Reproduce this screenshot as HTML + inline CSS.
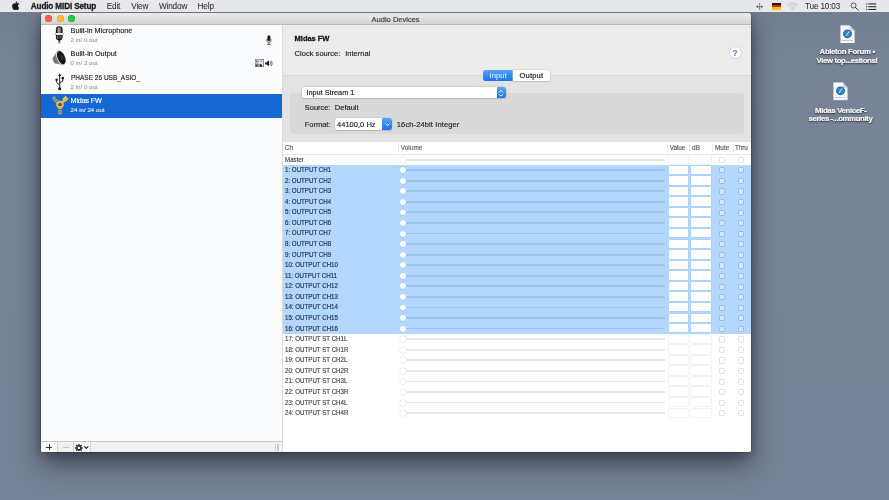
<!DOCTYPE html>
<html><head><meta charset="utf-8"><title>Audio Devices</title>
<style>
html,body{margin:0;padding:0}
body{width:889px;height:500px;overflow:hidden;position:relative;background:linear-gradient(#717d92 0,#778397 60px,#768297 100%);font-family:"Liberation Sans",sans-serif}
.r{position:absolute;display:block;box-sizing:border-box}
.t{position:absolute;white-space:nowrap;display:block;-webkit-text-stroke:0.16px}
</style></head><body>
<div class="r" style="left:0;top:0;width:889px;height:500px;will-change:transform">
<div class="r" style="left:0;top:0;width:889px;height:13px;z-index:5">
<div class="r" style="left:0.00px;top:0.00px;width:889.00px;height:11.60px;background:#e7e8eb;box-shadow:0 0 0 0.5px #8a8f99,0 0.6px 1.4px rgba(0,0,0,0.45);"></div>
<svg class="r" style="left:11.5px;top:1px" width="8" height="9.5" viewBox="0 0 170 200"><path fill="#1a1a1a" d="M150 68c-1 1-22 12-22 38 0 30 26 40 27 41 0 1-4 15-14 29-8 12-17 24-31 24s-17-8-33-8c-15 0-21 8-33 8s-21-11-31-25C2 158-8 130-8 104c0-42 27-64 54-64 14 0 26 9 35 9 8 0 22-10 38-10 6 0 28 1 42 21zM100 29c7-8 11-19 11-30 0-2 0-3 0-4-11 0-24 7-31 16-6 7-12 18-12 29 0 2 0 3 1 4 1 0 2 0 3 0 10 0 22-6 29-15z" transform="translate(10,8) scale(0.92)"/></svg>
<span class="t " style="left:30.80px;top:2.28px;font-size:8.20px;line-height:9.84px;color:#1c1c1c;font-weight:bold;letter-spacing:-0.154px;-webkit-text-stroke:0.3px;">Audio MIDI Setup</span>
<span class="t " style="left:106.70px;top:2.28px;font-size:8.20px;line-height:9.84px;color:#333;letter-spacing:-0.133px;-webkit-text-stroke:0.08px;">Edit</span>
<span class="t " style="left:131.30px;top:2.28px;font-size:8.20px;line-height:9.84px;color:#333;letter-spacing:-0.182px;-webkit-text-stroke:0.08px;">View</span>
<span class="t " style="left:159.00px;top:2.28px;font-size:8.20px;line-height:9.84px;color:#333;letter-spacing:-0.161px;-webkit-text-stroke:0.08px;">Window</span>
<span class="t " style="left:197.40px;top:2.28px;font-size:8.20px;line-height:9.84px;color:#333;letter-spacing:-0.066px;-webkit-text-stroke:0.08px;">Help</span>
<span class="t " style="left:805.00px;top:2.28px;font-size:8.20px;line-height:9.84px;color:#303030;letter-spacing:-0.158px;-webkit-text-stroke:0.05px;">Tue 10:03</span>
<svg class="r" style="left:755.6px;top:3px" width="7.4" height="7.4" viewBox="0 0 16 16"><g fill="#6a6a6a"><path d="M0 8l4.400-3.400v6.800zM16 8l-4.400-3.400v6.800z"/><rect x="3" y="7" width="10" height="2"/><rect x="7.300" y="0.500" width="1.400" height="15"/><path d="M8 0l2 2.600H6zM8 16l2-2.600H6z"/></g></svg>
<div class="r" style="left:771.80px;top:2.60px;width:9.20px;height:2.40px;background:#1a1a1a;"></div>
<div class="r" style="left:771.80px;top:5.00px;width:9.20px;height:2.40px;background:#d8232a;"></div>
<div class="r" style="left:771.80px;top:7.40px;width:9.20px;height:2.30px;background:#f7c600;"></div>
<svg class="r" style="left:787px;top:2.2px" width="11.4" height="8.4" viewBox="0 0 24 18"><g fill="none" stroke="#c4c6ca" stroke-width="2.2" stroke-linecap="round"><path d="M1.5 6.2a15 15 0 0 1 21 0"/><path d="M5 10a10 10 0 0 1 14 0"/><path d="M8.6 13.6a5 5 0 0 1 6.8 0"/></g><circle cx="12" cy="16" r="1.5" fill="#c4c6ca"/></svg>
<svg class="r" style="left:849.5px;top:2px" width="9" height="9" viewBox="0 0 18 18"><circle cx="7" cy="7" r="5" fill="none" stroke="#3a3a3a" stroke-width="1.600"/><path d="M10.800 10.800L16 16" stroke="#3a3a3a" stroke-width="2" stroke-linecap="round"/></svg>
<svg class="r" style="left:866px;top:2.6px" width="10.5" height="7.4" viewBox="0 0 21 15"><g fill="#2a2a2a"><rect x="0" y="0.8" width="2.4" height="2.2"/><rect x="0" y="6.4" width="2.4" height="2.2"/><rect x="0" y="12" width="2.4" height="2.2"/><rect x="4.6" y="0.8" width="16" height="2.2"/><rect x="4.6" y="6.4" width="16" height="2.2"/><rect x="4.6" y="12" width="16" height="2.2"/></g></svg>
</div>
<svg class="r" style="left:839.8px;top:24.6px" width="15" height="18.500" preserveAspectRatio="none" viewBox="0 0 30 38"><path d="M1 1h18.500l9.500 11v25H1z" fill="#fcfcfc" stroke="#cfd3d9" stroke-width="0.700"/><path d="M19.500 1v11h9.500z" fill="#cdd2da"/><circle cx="15" cy="18" r="9" fill="#1b5fae"/><circle cx="15" cy="18" r="7" fill="#2b84d6"/><path d="M18.600 13l-2 6-5 4 2-6z" fill="#4d9be2"/><path d="M18.600 13L11.600 23" stroke="#fff" stroke-width="1.500"/><text x="15" y="33.600" font-size="5" font-weight="bold" fill="#848b97" text-anchor="middle" font-family="Liberation Sans, sans-serif" letter-spacing="0.300">WEBLOC</text></svg>
<svg class="r" style="left:833.2px;top:82.4px" width="15" height="18.500" preserveAspectRatio="none" viewBox="0 0 30 38"><path d="M1 1h18.500l9.500 11v25H1z" fill="#fcfcfc" stroke="#cfd3d9" stroke-width="0.700"/><path d="M19.500 1v11h9.500z" fill="#cdd2da"/><circle cx="15" cy="18" r="9" fill="#1b5fae"/><circle cx="15" cy="18" r="7" fill="#2b84d6"/><path d="M18.600 13l-2 6-5 4 2-6z" fill="#4d9be2"/><path d="M18.600 13L11.600 23" stroke="#fff" stroke-width="1.500"/><text x="15" y="33.600" font-size="5" font-weight="bold" fill="#848b97" text-anchor="middle" font-family="Liberation Sans, sans-serif" letter-spacing="0.300">WEBLOC</text></svg>
<span class="t " style="left:819.60px;top:47.32px;font-size:7.80px;line-height:9.36px;color:#fff;font-weight:bold;letter-spacing:-0.344px;text-shadow:0 0.6px 1.6px rgba(0,0,0,0.75),0 0 0.8px rgba(0,0,0,0.5);-webkit-text-stroke:0.2px;">Ableton Forum •</span>
<span class="t " style="left:816.60px;top:56.32px;font-size:7.80px;line-height:9.36px;color:#fff;font-weight:bold;letter-spacing:-0.386px;text-shadow:0 0.6px 1.6px rgba(0,0,0,0.75),0 0 0.8px rgba(0,0,0,0.5);-webkit-text-stroke:0.2px;">View top...estions!</span>
<span class="t " style="left:815.00px;top:105.52px;font-size:7.80px;line-height:9.36px;color:#fff;font-weight:bold;letter-spacing:-0.354px;text-shadow:0 0.6px 1.6px rgba(0,0,0,0.75),0 0 0.8px rgba(0,0,0,0.5);-webkit-text-stroke:0.2px;">Midas VeniceF-</span>
<span class="t " style="left:808.60px;top:114.12px;font-size:7.80px;line-height:9.36px;color:#fff;font-weight:bold;letter-spacing:-0.384px;text-shadow:0 0.6px 1.6px rgba(0,0,0,0.75),0 0 0.8px rgba(0,0,0,0.5);-webkit-text-stroke:0.2px;">series -...ommunity</span>
<div class="r" style="left:41.00px;top:12.60px;width:710.00px;height:439.70px;background:#ececec;border-radius:3px 3px 2.5px 2.5px;box-shadow:0 12px 26px rgba(0,0,0,0.46),0 2px 13px rgba(0,0,0,0.25),0 0 0 0.5px rgba(0,0,0,0.3);"></div>
<div class="r" style="left:41.00px;top:12.60px;width:710.00px;height:12.30px;background:linear-gradient(#ececec,#d4d4d4);border-radius:3px 3px 0 0;border-bottom:0.7px solid #b9b9b9;"></div>
<div class="r" style="left:45.40px;top:15.20px;width:7.00px;height:7.00px;background:#fc5f57;border-radius:50%;box-shadow:inset 0 0 0 0.4px #e0443e;"></div>
<div class="r" style="left:56.50px;top:15.20px;width:7.00px;height:7.00px;background:#fdbc2e;border-radius:50%;box-shadow:inset 0 0 0 0.4px #dea123;"></div>
<div class="r" style="left:67.60px;top:15.20px;width:7.00px;height:7.00px;background:#28c840;border-radius:50%;box-shadow:inset 0 0 0 0.4px #1aab29;"></div>
<span class="t " style="left:371.60px;top:15.10px;font-size:7.50px;line-height:9.00px;color:#3c3c3c;letter-spacing:0.004px;">Audio Devices</span>
<div class="r" style="left:41.00px;top:25.00px;width:241.00px;height:416.00px;background:#fbfcfd;"></div>
<div class="r" style="left:282.00px;top:25.00px;width:0.60px;height:427.30px;background:#dcdcdc;"></div>
<div class="r" style="left:41.00px;top:94.30px;width:241.00px;height:23.50px;background:#1567d3;"></div>
<span class="t " style="left:70.60px;top:26.85px;font-size:7.25px;line-height:8.70px;color:#262626;letter-spacing:-0.024px;">Built-in Microphone</span>
<span class="t " style="left:70.60px;top:36.34px;font-size:6.10px;line-height:7.32px;color:#a4a4a4;letter-spacing:0.019px;">2 in/ 0 out</span>
<span class="t " style="left:70.60px;top:50.25px;font-size:7.25px;line-height:8.70px;color:#262626;letter-spacing:0.017px;">Built-in Output</span>
<span class="t " style="left:70.60px;top:58.74px;font-size:6.10px;line-height:7.32px;color:#a4a4a4;letter-spacing:0.019px;">0 in/ 2 out</span>
<span class="t " style="left:70.60px;top:73.65px;font-size:7.25px;line-height:8.70px;color:#262626;transform:scaleX(0.8965);transform-origin:0 50%;">PHASE 26 USB_ASIO_</span>
<span class="t " style="left:70.60px;top:82.74px;font-size:6.10px;line-height:7.32px;color:#a4a4a4;letter-spacing:0.019px;">2 in/ 0 out</span>
<span class="t " style="left:70.60px;top:97.15px;font-size:7.25px;line-height:8.70px;color:#fff;letter-spacing:-0.203px;">Midas FW</span>
<span class="t " style="left:70.60px;top:106.24px;font-size:6.10px;line-height:7.32px;color:#d5e4fa;letter-spacing:0.033px;">24 in/ 24 out</span>
<svg class="r" style="left:55px;top:26.4px" width="9" height="17.600" viewBox="0 0 18 35.200"><defs><linearGradient id="mg" x1="0" x2="1"><stop offset="0" stop-color="#3d3d3d"/><stop offset="0.400" stop-color="#a9a9a9"/><stop offset="0.470" stop-color="#2a2a2a"/><stop offset="0.540" stop-color="#9a9a9a"/><stop offset="1" stop-color="#303030"/></linearGradient></defs><rect x="1.800" y="0.400" width="13.400" height="28.400" rx="6.700" fill="#141414"/><rect x="3.700" y="2.300" width="9.600" height="12" rx="4.800" fill="url(#mg)"/><rect x="4.300" y="18.600" width="1.900" height="6.800" rx="0.900" fill="#8f8f8f"/><rect x="7.600" y="18.600" width="1.600" height="7.600" rx="0.800" fill="#5c5c5c"/><rect x="10.800" y="18.600" width="1.900" height="6.800" rx="0.900" fill="#8f8f8f"/><rect x="-0.200" y="14.400" width="17.400" height="2.800" fill="#808080"/><rect x="1.400" y="13.900" width="14.200" height="3.800" fill="#f6f6f6"/><path d="M6.300 28.600h4.400l-1.200 4.600h-2z" fill="#2e2e2e"/><rect x="5.400" y="33" width="6.200" height="1.500" rx="0.700" fill="#6e6e6e"/></svg>
<svg class="r" style="left:51.6px;top:50.2px" width="15.500" height="16.500" viewBox="0 0 31 33"><g transform="rotate(-23 18.700 15.200)"><ellipse cx="5.600" cy="15.200" rx="4" ry="7.600" fill="#2c2c2c" stroke="#b0b0b0" stroke-width="1.100"/><ellipse cx="8.800" cy="15.200" rx="5" ry="9.400" fill="#3a3a3a" stroke="#c8c8c8" stroke-width="1"/><ellipse cx="12.600" cy="15.200" rx="6.400" ry="12" fill="#585858" stroke="#d6d6d6" stroke-width="0.900"/><ellipse cx="17.200" cy="15.200" rx="8.200" ry="15" fill="#e0e0e0" stroke="#8c8c8c" stroke-width="0.800"/><ellipse cx="18.600" cy="15.200" rx="7.200" ry="13.900" fill="#131313"/><ellipse cx="19.800" cy="15.200" rx="3" ry="6" fill="#2f2f2f"/></g></svg>
<svg class="r" style="left:55px;top:73.2px" width="9.4" height="17.6" viewBox="0 0 19 35"><g fill="none" stroke="#151515" stroke-width="1.9" stroke-linejoin="round"><path d="M9.5 4v26"/><path d="M9.5 24L3.2 19v-4.5"/><path d="M9.5 20.5l6.2-4.5V11"/></g><path d="M9.500 0l3.200 5.600h-6.400z" fill="#151515"/><circle cx="3.200" cy="13.200" r="2.400" fill="#151515"/><rect x="13.4" y="7.600" width="4.600" height="4.600" fill="#151515"/><circle cx="9.500" cy="31.400" r="3.100" fill="#151515"/></svg>
<svg class="r" style="left:51.5px;top:96px" width="17" height="19" viewBox="0 0 34 38"><g stroke="#d8b145" fill="none"><g stroke-width="7.600" stroke-dasharray="2.700 1.700"><path d="M16 24v13.500"/><path d="M12 13L1.500 2.500"/></g><path d="M20 13l5.500-5.500" stroke-width="5"/><circle cx="16" cy="17" r="5.400" stroke-width="4.600" stroke="#dcb84e"/></g><circle cx="16" cy="17" r="3.100" fill="#3a4f78"/><rect x="22.600" y="1.200" width="8.800" height="8.800" fill="#e8c050" transform="rotate(45 27 5.600)"/></svg>
<svg class="r" style="left:266.4px;top:35px" width="5.8" height="10" viewBox="0 0 12 20"><rect x="2.800" y="0" width="6.400" height="12" rx="3.200" fill="#1c1c1c"/><path d="M1.200 8.500v1.500a4.800 4.800 0 0 0 9.600 0V8.500" fill="none" stroke="#2a2a2a" stroke-width="1.400"/><rect x="5.200" y="15" width="1.600" height="3.400" fill="#222"/><rect x="2.600" y="18" width="6.800" height="1.600" fill="#222"/></svg>
<svg class="r" style="left:255px;top:59px" width="9" height="8" viewBox="0 0 18 16"><rect x="0.600" y="0.600" width="16.800" height="14.800" fill="#e6e7e9" stroke="#5e5e5e" stroke-width="1.200"/><path d="M1.200 1.200h7.600c-1.600 3.600-2.200 6.400-2 8.200h2.600c0 2 0.200 3.800 0.700 5.400H1.200z" fill="#b4b7bc"/><path d="M1.200 9.500c2 2.400 5 4 8 5.300H1.200z" fill="#4a4c50"/><path d="M3.400 3.400v2.600M12.600 3.400v2.600" stroke="#333" stroke-width="1.300"/><path d="M3 10.400c3 2.400 8.500 2.400 12-0.400" fill="none" stroke="#444" stroke-width="1"/><path d="M10 9.500l0 6.500 1.600-1.600 1.200 2.400 1-0.500-1.200-2.300h2.200z" fill="#111"/></svg>
<svg class="r" style="left:265.4px;top:59.8px" width="8.4" height="6.6" viewBox="0 0 17 13"><path d="M0.500 4.200h3L8 0.500v12L3.500 8.800h-3z" fill="#1a1a1a"/><path d="M10.200 3.600a4 4 0 0 1 0 5.800" fill="none" stroke="#1a1a1a" stroke-width="1.400" stroke-linecap="round"/><path d="M12.600 1.400a7 7 0 0 1 0 10.200" fill="none" stroke="#1a1a1a" stroke-width="1.400" stroke-linecap="round"/></svg>
<div class="r" style="left:41.00px;top:441.00px;width:241.00px;height:11.30px;background:#f1f1f1;border-top:0.6px solid #c9c9c9;border-radius:0 0 0 2.5px;"></div>
<div class="r" style="left:41.00px;top:441.60px;width:16.30px;height:10.70px;background:#fafafa;border-radius:0 0 0 2.5px;"></div>
<div class="r" style="left:73.20px;top:441.60px;width:17.00px;height:10.70px;background:#fafafa;"></div>
<div class="r" style="left:57.30px;top:441.60px;width:0.60px;height:10.70px;background:#d2d2d2;"></div>
<div class="r" style="left:73.00px;top:441.60px;width:0.60px;height:10.70px;background:#d2d2d2;"></div>
<div class="r" style="left:90.20px;top:441.60px;width:0.60px;height:10.70px;background:#d2d2d2;"></div>
<div class="r" style="left:46.20px;top:447.00px;width:5.80px;height:0.65px;background:#333;"></div>
<div class="r" style="left:48.78px;top:444.40px;width:0.65px;height:5.80px;background:#333;"></div>
<div class="r" style="left:63.00px;top:447.20px;width:5.60px;height:0.70px;background:#c3c3c3;"></div>
<svg class="r" style="left:74.8px;top:443.6px" width="7.8" height="7.8" viewBox="-12 -12 24 24"><g fill="#2b2b2b"><rect x="-2.300" y="-12" width="4.600" height="24" rx="0.800" transform="rotate(0)"/><rect x="-2.300" y="-12" width="4.600" height="24" rx="0.800" transform="rotate(45)"/><rect x="-2.300" y="-12" width="4.600" height="24" rx="0.800" transform="rotate(90)"/><rect x="-2.300" y="-12" width="4.600" height="24" rx="0.800" transform="rotate(135)"/><circle r="7.800"/></g><circle r="3.700" fill="#fafafa"/></svg>
<svg class="r" style="left:84px;top:445.6px" width="4.600" height="3.100" viewBox="0 0 9 6"><path d="M1 1l3.5 3.5L8 1" fill="none" stroke="#1c1c1c" stroke-width="2.100" stroke-linecap="round" stroke-linejoin="round"/></svg>
<div class="r" style="left:275.40px;top:444.00px;width:0.60px;height:7.00px;background:#cfcfcf;"></div>
<div class="r" style="left:276.80px;top:444.00px;width:0.60px;height:7.00px;background:#cfcfcf;"></div>
<div class="r" style="left:278.20px;top:444.00px;width:0.60px;height:7.00px;background:#cfcfcf;"></div>
<div class="r" style="left:282.60px;top:25.00px;width:468.40px;height:50.20px;background:#ececec;"></div>
<div class="r" style="left:282.60px;top:75.20px;width:468.40px;height:66.60px;background:#e3e3e3;border-top:0.6px solid #d6d6d6;"></div>
<span class="t " style="left:294.60px;top:34.30px;font-size:7.50px;line-height:9.00px;color:#161616;font-weight:bold;letter-spacing:-0.025px;-webkit-text-stroke:0.3px;">Midas FW</span>
<span class="t " style="left:294.60px;top:48.90px;font-size:7.50px;line-height:9.00px;color:#262626;letter-spacing:0.028px;">Clock source:</span>
<span class="t " style="left:345.20px;top:48.90px;font-size:7.50px;line-height:9.00px;color:#262626;letter-spacing:0.023px;">Internal</span>
<div class="r" style="left:729.60px;top:47.30px;width:11.00px;height:11.00px;background:#fff;border-radius:50%;box-shadow:0 0 0 0.5px #c8c8c8,0 0.5px 1px rgba(0,0,0,0.16);"></div>
<span class="t " style="left:732.60px;top:47.66px;font-size:8.40px;line-height:10.08px;color:#4a90d4;font-weight:bold;">?</span>
<div class="r" style="left:290.40px;top:92.80px;width:453.20px;height:41.60px;background:#d9d9d9;border-radius:3px;"></div>
<div class="r" style="left:483.00px;top:69.60px;width:30.40px;height:11.40px;background:linear-gradient(#55a1f8,#1b74f0);border-radius:2.5px 0 0 2.5px;"></div>
<div class="r" style="left:513.40px;top:69.60px;width:37.00px;height:11.40px;background:#fff;border-radius:0 2.5px 2.5px 0;box-shadow:0 0 0 0.5px #c8c8c8,0 0.5px 0.8px rgba(0,0,0,0.2);"></div>
<span class="t " style="left:489.60px;top:70.90px;font-size:7.50px;line-height:9.00px;color:#e4efff;letter-spacing:0.064px;-webkit-text-stroke:0.05px;">Input</span>
<span class="t " style="left:519.60px;top:70.90px;font-size:7.50px;line-height:9.00px;color:#151515;letter-spacing:0.181px;">Output</span>
<div class="r" style="left:301.60px;top:87.20px;width:204.40px;height:11.20px;background:#fff;border-radius:2.5px;box-shadow:0 0 0 0.5px #c2c2c2,0 0.5px 0.8px rgba(0,0,0,0.2);"></div>
<div class="r" style="left:496.60px;top:87.20px;width:9.40px;height:11.20px;background:linear-gradient(#58a5fa,#1a72ef);border-radius:0 2.5px 2.5px 0;"></div>
<svg class="r" style="left:498.1px;top:88.5px" width="6" height="8.600" viewBox="0 0 10 15"><path d="M1.800 5.600L5 2.400l3.200 3.200M1.800 9.400L5 12.600l3.200-3.200" fill="none" stroke="#fff" stroke-width="1.700" stroke-linecap="round" stroke-linejoin="round"/></svg>
<span class="t " style="left:306.40px;top:89.06px;font-size:7.40px;line-height:8.88px;color:#262626;letter-spacing:-0.038px;">Input Stream 1</span>
<span class="t " style="left:304.80px;top:103.10px;font-size:7.50px;line-height:9.00px;color:#262626;letter-spacing:-0.035px;">Source:</span>
<span class="t " style="left:334.80px;top:103.10px;font-size:7.50px;line-height:9.00px;color:#262626;letter-spacing:0.005px;">Default</span>
<span class="t " style="left:304.80px;top:119.90px;font-size:7.50px;line-height:9.00px;color:#262626;letter-spacing:-0.034px;">Format:</span>
<div class="r" style="left:334.80px;top:118.00px;width:57.20px;height:11.60px;background:#fff;border-radius:2.5px;box-shadow:0 0 0 0.5px #c2c2c2,0 0.5px 0.8px rgba(0,0,0,0.2);"></div>
<div class="r" style="left:382.40px;top:118.00px;width:9.60px;height:11.60px;background:linear-gradient(#58a5fa,#1a72ef);border-radius:0 2.5px 2.5px 0;"></div>
<svg class="r" style="left:384.6px;top:122.6px" width="5.200" height="3.700" viewBox="0 0 10 7"><path d="M1.5 1.5L5 5l3.5-3.5" fill="none" stroke="#fff" stroke-width="1.7" stroke-linecap="round" stroke-linejoin="round"/></svg>
<span class="t " style="left:337.00px;top:119.70px;font-size:7.50px;line-height:9.00px;color:#262626;letter-spacing:0.024px;">44100,0 Hz</span>
<span class="t " style="left:396.80px;top:119.90px;font-size:7.50px;line-height:9.00px;color:#262626;letter-spacing:0.119px;">16ch-24bit Integer</span>
<div class="r" style="left:282.70px;top:141.80px;width:468.30px;height:310.50px;background:#fff;border-radius:0 0 2.5px 0;"></div>
<div class="r" style="left:282.70px;top:153.60px;width:468.30px;height:0.60px;background:#e6e6e6;"></div>
<div class="r" style="left:398.20px;top:143.80px;width:0.60px;height:8.60px;background:#e9e9e9;"></div>
<div class="r" style="left:666.60px;top:143.80px;width:0.60px;height:8.60px;background:#e9e9e9;"></div>
<div class="r" style="left:689.40px;top:143.80px;width:0.60px;height:8.60px;background:#e9e9e9;"></div>
<div class="r" style="left:712.40px;top:143.80px;width:0.60px;height:8.60px;background:#e9e9e9;"></div>
<div class="r" style="left:732.60px;top:143.80px;width:0.60px;height:8.60px;background:#e9e9e9;"></div>
<span class="t " style="left:284.80px;top:143.96px;font-size:6.40px;line-height:7.68px;color:#5c5c5c;letter-spacing:0.009px;">Ch</span>
<span class="t " style="left:400.80px;top:143.96px;font-size:6.40px;line-height:7.68px;color:#5c5c5c;letter-spacing:0.042px;">Volume</span>
<span class="t " style="left:669.80px;top:143.96px;font-size:6.40px;line-height:7.68px;color:#5c5c5c;letter-spacing:-0.099px;">Value</span>
<span class="t " style="left:692.00px;top:143.96px;font-size:6.40px;line-height:7.68px;color:#5c5c5c;letter-spacing:0.086px;">dB</span>
<span class="t " style="left:715.00px;top:143.96px;font-size:6.40px;line-height:7.68px;color:#5c5c5c;letter-spacing:0.043px;">Mute</span>
<span class="t " style="left:735.00px;top:143.96px;font-size:6.40px;line-height:7.68px;color:#5c5c5c;letter-spacing:-0.090px;">Thru</span>
<div class="r" style="left:282.70px;top:164.70px;width:468.30px;height:169.04px;background:#b3d7ff;"></div>
<span class="t " style="left:284.80px;top:155.70px;font-size:6.50px;line-height:7.80px;color:#3f3f3f;transform:scaleX(0.9477);transform-origin:0 50%;-webkit-text-stroke:0.14px;">Master</span>
<div class="r" style="left:404.00px;top:158.80px;width:261.00px;height:1.80px;background:#e7e7e7;border-radius:1px;"></div>
<div class="r" style="left:399.65px;top:156.85px;width:5.90px;height:5.90px;background:#fff;border-radius:50%;box-shadow:0 0 0 0.5px #e3e3e3,0 0.3px 0.6px rgba(0,0,0,0.12);"></div>
<div class="r" style="left:668.60px;top:155.20px;width:19.80px;height:8.40px;background:#fff;box-shadow:0 0 0 0.5px #e6e6e6;border-radius:0.5px;"></div>
<div class="r" style="left:691.20px;top:155.20px;width:20.20px;height:8.40px;background:#fff;box-shadow:0 0 0 0.5px #e6e6e6;border-radius:0.5px;"></div>
<div class="r" style="left:719.30px;top:156.90px;width:6.20px;height:6.20px;background:#fff;border:0.7px solid #e0e0e0;border-radius:1.5px;"></div>
<div class="r" style="left:738.10px;top:156.90px;width:6.20px;height:6.20px;background:#fff;border:0.7px solid #e0e0e0;border-radius:1.5px;"></div>
<span class="t " style="left:284.80px;top:166.10px;font-size:6.50px;line-height:7.80px;color:#2a3f58;transform:scaleX(0.9477);transform-origin:0 50%;-webkit-text-stroke:0.22px;">1: OUTPUT CH1</span>
<div class="r" style="left:404.00px;top:169.20px;width:261.00px;height:1.80px;background:#9cc3ee;border-radius:1px;"></div>
<div class="r" style="left:399.65px;top:167.25px;width:5.90px;height:5.90px;background:#fff;border-radius:50%;box-shadow:0 0.3px 0.8px rgba(40,80,130,0.35);"></div>
<div class="r" style="left:668.60px;top:165.60px;width:19.80px;height:8.40px;background:#fff;box-shadow:0 0 0 0.5px #a9cdf3;border-radius:0.5px;"></div>
<div class="r" style="left:691.20px;top:165.60px;width:20.20px;height:8.40px;background:#fff;box-shadow:0 0 0 0.5px #a9cdf3;border-radius:0.5px;"></div>
<div class="r" style="left:719.30px;top:167.30px;width:6.20px;height:6.20px;background:#d4e6fb;border:0.7px solid #94b9e5;border-radius:1.5px;"></div>
<div class="r" style="left:738.10px;top:167.30px;width:6.20px;height:6.20px;background:#d4e6fb;border:0.7px solid #94b9e5;border-radius:1.5px;"></div>
<span class="t " style="left:284.80px;top:176.66px;font-size:6.50px;line-height:7.80px;color:#2a3f58;transform:scaleX(0.9477);transform-origin:0 50%;-webkit-text-stroke:0.22px;">2: OUTPUT CH2</span>
<div class="r" style="left:404.00px;top:179.76px;width:261.00px;height:1.80px;background:#9cc3ee;border-radius:1px;"></div>
<div class="r" style="left:399.65px;top:177.81px;width:5.90px;height:5.90px;background:#fff;border-radius:50%;box-shadow:0 0.3px 0.8px rgba(40,80,130,0.35);"></div>
<div class="r" style="left:668.60px;top:176.16px;width:19.80px;height:8.40px;background:#fff;box-shadow:0 0 0 0.5px #a9cdf3;border-radius:0.5px;"></div>
<div class="r" style="left:691.20px;top:176.16px;width:20.20px;height:8.40px;background:#fff;box-shadow:0 0 0 0.5px #a9cdf3;border-radius:0.5px;"></div>
<div class="r" style="left:719.30px;top:177.87px;width:6.20px;height:6.20px;background:#d4e6fb;border:0.7px solid #94b9e5;border-radius:1.5px;"></div>
<div class="r" style="left:738.10px;top:177.87px;width:6.20px;height:6.20px;background:#d4e6fb;border:0.7px solid #94b9e5;border-radius:1.5px;"></div>
<span class="t " style="left:284.80px;top:187.23px;font-size:6.50px;line-height:7.80px;color:#2a3f58;transform:scaleX(0.9477);transform-origin:0 50%;-webkit-text-stroke:0.22px;">3: OUTPUT CH3</span>
<div class="r" style="left:404.00px;top:190.33px;width:261.00px;height:1.80px;background:#9cc3ee;border-radius:1px;"></div>
<div class="r" style="left:399.65px;top:188.38px;width:5.90px;height:5.90px;background:#fff;border-radius:50%;box-shadow:0 0.3px 0.8px rgba(40,80,130,0.35);"></div>
<div class="r" style="left:668.60px;top:186.73px;width:19.80px;height:8.40px;background:#fff;box-shadow:0 0 0 0.5px #a9cdf3;border-radius:0.5px;"></div>
<div class="r" style="left:691.20px;top:186.73px;width:20.20px;height:8.40px;background:#fff;box-shadow:0 0 0 0.5px #a9cdf3;border-radius:0.5px;"></div>
<div class="r" style="left:719.30px;top:188.43px;width:6.20px;height:6.20px;background:#d4e6fb;border:0.7px solid #94b9e5;border-radius:1.5px;"></div>
<div class="r" style="left:738.10px;top:188.43px;width:6.20px;height:6.20px;background:#d4e6fb;border:0.7px solid #94b9e5;border-radius:1.5px;"></div>
<span class="t " style="left:284.80px;top:197.79px;font-size:6.50px;line-height:7.80px;color:#2a3f58;transform:scaleX(0.9477);transform-origin:0 50%;-webkit-text-stroke:0.22px;">4: OUTPUT CH4</span>
<div class="r" style="left:404.00px;top:200.89px;width:261.00px;height:1.80px;background:#9cc3ee;border-radius:1px;"></div>
<div class="r" style="left:399.65px;top:198.94px;width:5.90px;height:5.90px;background:#fff;border-radius:50%;box-shadow:0 0.3px 0.8px rgba(40,80,130,0.35);"></div>
<div class="r" style="left:668.60px;top:197.29px;width:19.80px;height:8.40px;background:#fff;box-shadow:0 0 0 0.5px #a9cdf3;border-radius:0.5px;"></div>
<div class="r" style="left:691.20px;top:197.29px;width:20.20px;height:8.40px;background:#fff;box-shadow:0 0 0 0.5px #a9cdf3;border-radius:0.5px;"></div>
<div class="r" style="left:719.30px;top:199.00px;width:6.20px;height:6.20px;background:#d4e6fb;border:0.7px solid #94b9e5;border-radius:1.5px;"></div>
<div class="r" style="left:738.10px;top:199.00px;width:6.20px;height:6.20px;background:#d4e6fb;border:0.7px solid #94b9e5;border-radius:1.5px;"></div>
<span class="t " style="left:284.80px;top:208.36px;font-size:6.50px;line-height:7.80px;color:#2a3f58;transform:scaleX(0.9477);transform-origin:0 50%;-webkit-text-stroke:0.22px;">5: OUTPUT CH5</span>
<div class="r" style="left:404.00px;top:211.46px;width:261.00px;height:1.80px;background:#9cc3ee;border-radius:1px;"></div>
<div class="r" style="left:399.65px;top:209.51px;width:5.90px;height:5.90px;background:#fff;border-radius:50%;box-shadow:0 0.3px 0.8px rgba(40,80,130,0.35);"></div>
<div class="r" style="left:668.60px;top:207.86px;width:19.80px;height:8.40px;background:#fff;box-shadow:0 0 0 0.5px #a9cdf3;border-radius:0.5px;"></div>
<div class="r" style="left:691.20px;top:207.86px;width:20.20px;height:8.40px;background:#fff;box-shadow:0 0 0 0.5px #a9cdf3;border-radius:0.5px;"></div>
<div class="r" style="left:719.30px;top:209.56px;width:6.20px;height:6.20px;background:#d4e6fb;border:0.7px solid #94b9e5;border-radius:1.5px;"></div>
<div class="r" style="left:738.10px;top:209.56px;width:6.20px;height:6.20px;background:#d4e6fb;border:0.7px solid #94b9e5;border-radius:1.5px;"></div>
<span class="t " style="left:284.80px;top:218.92px;font-size:6.50px;line-height:7.80px;color:#2a3f58;transform:scaleX(0.9477);transform-origin:0 50%;-webkit-text-stroke:0.22px;">6: OUTPUT CH6</span>
<div class="r" style="left:404.00px;top:222.02px;width:261.00px;height:1.80px;background:#9cc3ee;border-radius:1px;"></div>
<div class="r" style="left:399.65px;top:220.07px;width:5.90px;height:5.90px;background:#fff;border-radius:50%;box-shadow:0 0.3px 0.8px rgba(40,80,130,0.35);"></div>
<div class="r" style="left:668.60px;top:218.42px;width:19.80px;height:8.40px;background:#fff;box-shadow:0 0 0 0.5px #a9cdf3;border-radius:0.5px;"></div>
<div class="r" style="left:691.20px;top:218.42px;width:20.20px;height:8.40px;background:#fff;box-shadow:0 0 0 0.5px #a9cdf3;border-radius:0.5px;"></div>
<div class="r" style="left:719.30px;top:220.12px;width:6.20px;height:6.20px;background:#d4e6fb;border:0.7px solid #94b9e5;border-radius:1.5px;"></div>
<div class="r" style="left:738.10px;top:220.12px;width:6.20px;height:6.20px;background:#d4e6fb;border:0.7px solid #94b9e5;border-radius:1.5px;"></div>
<span class="t " style="left:284.80px;top:229.49px;font-size:6.50px;line-height:7.80px;color:#2a3f58;transform:scaleX(0.9477);transform-origin:0 50%;-webkit-text-stroke:0.22px;">7: OUTPUT CH7</span>
<div class="r" style="left:404.00px;top:232.59px;width:261.00px;height:1.80px;background:#9cc3ee;border-radius:1px;"></div>
<div class="r" style="left:399.65px;top:230.64px;width:5.90px;height:5.90px;background:#fff;border-radius:50%;box-shadow:0 0.3px 0.8px rgba(40,80,130,0.35);"></div>
<div class="r" style="left:668.60px;top:228.99px;width:19.80px;height:8.40px;background:#fff;box-shadow:0 0 0 0.5px #a9cdf3;border-radius:0.5px;"></div>
<div class="r" style="left:691.20px;top:228.99px;width:20.20px;height:8.40px;background:#fff;box-shadow:0 0 0 0.5px #a9cdf3;border-radius:0.5px;"></div>
<div class="r" style="left:719.30px;top:230.69px;width:6.20px;height:6.20px;background:#d4e6fb;border:0.7px solid #94b9e5;border-radius:1.5px;"></div>
<div class="r" style="left:738.10px;top:230.69px;width:6.20px;height:6.20px;background:#d4e6fb;border:0.7px solid #94b9e5;border-radius:1.5px;"></div>
<span class="t " style="left:284.80px;top:240.06px;font-size:6.50px;line-height:7.80px;color:#2a3f58;transform:scaleX(0.9477);transform-origin:0 50%;-webkit-text-stroke:0.22px;">8: OUTPUT CH8</span>
<div class="r" style="left:404.00px;top:243.16px;width:261.00px;height:1.80px;background:#9cc3ee;border-radius:1px;"></div>
<div class="r" style="left:399.65px;top:241.21px;width:5.90px;height:5.90px;background:#fff;border-radius:50%;box-shadow:0 0.3px 0.8px rgba(40,80,130,0.35);"></div>
<div class="r" style="left:668.60px;top:239.56px;width:19.80px;height:8.40px;background:#fff;box-shadow:0 0 0 0.5px #a9cdf3;border-radius:0.5px;"></div>
<div class="r" style="left:691.20px;top:239.56px;width:20.20px;height:8.40px;background:#fff;box-shadow:0 0 0 0.5px #a9cdf3;border-radius:0.5px;"></div>
<div class="r" style="left:719.30px;top:241.26px;width:6.20px;height:6.20px;background:#d4e6fb;border:0.7px solid #94b9e5;border-radius:1.5px;"></div>
<div class="r" style="left:738.10px;top:241.26px;width:6.20px;height:6.20px;background:#d4e6fb;border:0.7px solid #94b9e5;border-radius:1.5px;"></div>
<span class="t " style="left:284.80px;top:250.62px;font-size:6.50px;line-height:7.80px;color:#2a3f58;transform:scaleX(0.9477);transform-origin:0 50%;-webkit-text-stroke:0.22px;">9: OUTPUT CH9</span>
<div class="r" style="left:404.00px;top:253.72px;width:261.00px;height:1.80px;background:#9cc3ee;border-radius:1px;"></div>
<div class="r" style="left:399.65px;top:251.77px;width:5.90px;height:5.90px;background:#fff;border-radius:50%;box-shadow:0 0.3px 0.8px rgba(40,80,130,0.35);"></div>
<div class="r" style="left:668.60px;top:250.12px;width:19.80px;height:8.40px;background:#fff;box-shadow:0 0 0 0.5px #a9cdf3;border-radius:0.5px;"></div>
<div class="r" style="left:691.20px;top:250.12px;width:20.20px;height:8.40px;background:#fff;box-shadow:0 0 0 0.5px #a9cdf3;border-radius:0.5px;"></div>
<div class="r" style="left:719.30px;top:251.82px;width:6.20px;height:6.20px;background:#d4e6fb;border:0.7px solid #94b9e5;border-radius:1.5px;"></div>
<div class="r" style="left:738.10px;top:251.82px;width:6.20px;height:6.20px;background:#d4e6fb;border:0.7px solid #94b9e5;border-radius:1.5px;"></div>
<span class="t " style="left:284.80px;top:261.19px;font-size:6.50px;line-height:7.80px;color:#2a3f58;transform:scaleX(0.9477);transform-origin:0 50%;-webkit-text-stroke:0.22px;">10: OUTPUT CH10</span>
<div class="r" style="left:404.00px;top:264.29px;width:261.00px;height:1.80px;background:#9cc3ee;border-radius:1px;"></div>
<div class="r" style="left:399.65px;top:262.34px;width:5.90px;height:5.90px;background:#fff;border-radius:50%;box-shadow:0 0.3px 0.8px rgba(40,80,130,0.35);"></div>
<div class="r" style="left:668.60px;top:260.69px;width:19.80px;height:8.40px;background:#fff;box-shadow:0 0 0 0.5px #a9cdf3;border-radius:0.5px;"></div>
<div class="r" style="left:691.20px;top:260.69px;width:20.20px;height:8.40px;background:#fff;box-shadow:0 0 0 0.5px #a9cdf3;border-radius:0.5px;"></div>
<div class="r" style="left:719.30px;top:262.38px;width:6.20px;height:6.20px;background:#d4e6fb;border:0.7px solid #94b9e5;border-radius:1.5px;"></div>
<div class="r" style="left:738.10px;top:262.38px;width:6.20px;height:6.20px;background:#d4e6fb;border:0.7px solid #94b9e5;border-radius:1.5px;"></div>
<span class="t " style="left:284.80px;top:271.75px;font-size:6.50px;line-height:7.80px;color:#2a3f58;transform:scaleX(0.9477);transform-origin:0 50%;-webkit-text-stroke:0.22px;">11: OUTPUT CH11</span>
<div class="r" style="left:404.00px;top:274.85px;width:261.00px;height:1.80px;background:#9cc3ee;border-radius:1px;"></div>
<div class="r" style="left:399.65px;top:272.90px;width:5.90px;height:5.90px;background:#fff;border-radius:50%;box-shadow:0 0.3px 0.8px rgba(40,80,130,0.35);"></div>
<div class="r" style="left:668.60px;top:271.25px;width:19.80px;height:8.40px;background:#fff;box-shadow:0 0 0 0.5px #a9cdf3;border-radius:0.5px;"></div>
<div class="r" style="left:691.20px;top:271.25px;width:20.20px;height:8.40px;background:#fff;box-shadow:0 0 0 0.5px #a9cdf3;border-radius:0.5px;"></div>
<div class="r" style="left:719.30px;top:272.95px;width:6.20px;height:6.20px;background:#d4e6fb;border:0.7px solid #94b9e5;border-radius:1.5px;"></div>
<div class="r" style="left:738.10px;top:272.95px;width:6.20px;height:6.20px;background:#d4e6fb;border:0.7px solid #94b9e5;border-radius:1.5px;"></div>
<span class="t " style="left:284.80px;top:282.31px;font-size:6.50px;line-height:7.80px;color:#2a3f58;transform:scaleX(0.9477);transform-origin:0 50%;-webkit-text-stroke:0.22px;">12: OUTPUT CH12</span>
<div class="r" style="left:404.00px;top:285.42px;width:261.00px;height:1.80px;background:#9cc3ee;border-radius:1px;"></div>
<div class="r" style="left:399.65px;top:283.47px;width:5.90px;height:5.90px;background:#fff;border-radius:50%;box-shadow:0 0.3px 0.8px rgba(40,80,130,0.35);"></div>
<div class="r" style="left:668.60px;top:281.81px;width:19.80px;height:8.40px;background:#fff;box-shadow:0 0 0 0.5px #a9cdf3;border-radius:0.5px;"></div>
<div class="r" style="left:691.20px;top:281.81px;width:20.20px;height:8.40px;background:#fff;box-shadow:0 0 0 0.5px #a9cdf3;border-radius:0.5px;"></div>
<div class="r" style="left:719.30px;top:283.51px;width:6.20px;height:6.20px;background:#d4e6fb;border:0.7px solid #94b9e5;border-radius:1.5px;"></div>
<div class="r" style="left:738.10px;top:283.51px;width:6.20px;height:6.20px;background:#d4e6fb;border:0.7px solid #94b9e5;border-radius:1.5px;"></div>
<span class="t " style="left:284.80px;top:292.88px;font-size:6.50px;line-height:7.80px;color:#2a3f58;transform:scaleX(0.9477);transform-origin:0 50%;-webkit-text-stroke:0.22px;">13: OUTPUT CH13</span>
<div class="r" style="left:404.00px;top:295.98px;width:261.00px;height:1.80px;background:#9cc3ee;border-radius:1px;"></div>
<div class="r" style="left:399.65px;top:294.03px;width:5.90px;height:5.90px;background:#fff;border-radius:50%;box-shadow:0 0.3px 0.8px rgba(40,80,130,0.35);"></div>
<div class="r" style="left:668.60px;top:292.38px;width:19.80px;height:8.40px;background:#fff;box-shadow:0 0 0 0.5px #a9cdf3;border-radius:0.5px;"></div>
<div class="r" style="left:691.20px;top:292.38px;width:20.20px;height:8.40px;background:#fff;box-shadow:0 0 0 0.5px #a9cdf3;border-radius:0.5px;"></div>
<div class="r" style="left:719.30px;top:294.08px;width:6.20px;height:6.20px;background:#d4e6fb;border:0.7px solid #94b9e5;border-radius:1.5px;"></div>
<div class="r" style="left:738.10px;top:294.08px;width:6.20px;height:6.20px;background:#d4e6fb;border:0.7px solid #94b9e5;border-radius:1.5px;"></div>
<span class="t " style="left:284.80px;top:303.44px;font-size:6.50px;line-height:7.80px;color:#2a3f58;transform:scaleX(0.9477);transform-origin:0 50%;-webkit-text-stroke:0.22px;">14: OUTPUT CH14</span>
<div class="r" style="left:404.00px;top:306.55px;width:261.00px;height:1.80px;background:#9cc3ee;border-radius:1px;"></div>
<div class="r" style="left:399.65px;top:304.60px;width:5.90px;height:5.90px;background:#fff;border-radius:50%;box-shadow:0 0.3px 0.8px rgba(40,80,130,0.35);"></div>
<div class="r" style="left:668.60px;top:302.94px;width:19.80px;height:8.40px;background:#fff;box-shadow:0 0 0 0.5px #a9cdf3;border-radius:0.5px;"></div>
<div class="r" style="left:691.20px;top:302.94px;width:20.20px;height:8.40px;background:#fff;box-shadow:0 0 0 0.5px #a9cdf3;border-radius:0.5px;"></div>
<div class="r" style="left:719.30px;top:304.64px;width:6.20px;height:6.20px;background:#d4e6fb;border:0.7px solid #94b9e5;border-radius:1.5px;"></div>
<div class="r" style="left:738.10px;top:304.64px;width:6.20px;height:6.20px;background:#d4e6fb;border:0.7px solid #94b9e5;border-radius:1.5px;"></div>
<span class="t " style="left:284.80px;top:314.01px;font-size:6.50px;line-height:7.80px;color:#2a3f58;transform:scaleX(0.9477);transform-origin:0 50%;-webkit-text-stroke:0.22px;">15: OUTPUT CH15</span>
<div class="r" style="left:404.00px;top:317.11px;width:261.00px;height:1.80px;background:#9cc3ee;border-radius:1px;"></div>
<div class="r" style="left:399.65px;top:315.16px;width:5.90px;height:5.90px;background:#fff;border-radius:50%;box-shadow:0 0.3px 0.8px rgba(40,80,130,0.35);"></div>
<div class="r" style="left:668.60px;top:313.51px;width:19.80px;height:8.40px;background:#fff;box-shadow:0 0 0 0.5px #a9cdf3;border-radius:0.5px;"></div>
<div class="r" style="left:691.20px;top:313.51px;width:20.20px;height:8.40px;background:#fff;box-shadow:0 0 0 0.5px #a9cdf3;border-radius:0.5px;"></div>
<div class="r" style="left:719.30px;top:315.21px;width:6.20px;height:6.20px;background:#d4e6fb;border:0.7px solid #94b9e5;border-radius:1.5px;"></div>
<div class="r" style="left:738.10px;top:315.21px;width:6.20px;height:6.20px;background:#d4e6fb;border:0.7px solid #94b9e5;border-radius:1.5px;"></div>
<span class="t " style="left:284.80px;top:324.57px;font-size:6.50px;line-height:7.80px;color:#2a3f58;transform:scaleX(0.9477);transform-origin:0 50%;-webkit-text-stroke:0.22px;">16: OUTPUT CH16</span>
<div class="r" style="left:404.00px;top:327.68px;width:261.00px;height:1.80px;background:#9cc3ee;border-radius:1px;"></div>
<div class="r" style="left:399.65px;top:325.73px;width:5.90px;height:5.90px;background:#fff;border-radius:50%;box-shadow:0 0.3px 0.8px rgba(40,80,130,0.35);"></div>
<div class="r" style="left:668.60px;top:324.07px;width:19.80px;height:8.40px;background:#fff;box-shadow:0 0 0 0.5px #a9cdf3;border-radius:0.5px;"></div>
<div class="r" style="left:691.20px;top:324.07px;width:20.20px;height:8.40px;background:#fff;box-shadow:0 0 0 0.5px #a9cdf3;border-radius:0.5px;"></div>
<div class="r" style="left:719.30px;top:325.77px;width:6.20px;height:6.20px;background:#d4e6fb;border:0.7px solid #94b9e5;border-radius:1.5px;"></div>
<div class="r" style="left:738.10px;top:325.77px;width:6.20px;height:6.20px;background:#d4e6fb;border:0.7px solid #94b9e5;border-radius:1.5px;"></div>
<span class="t " style="left:284.80px;top:335.14px;font-size:6.50px;line-height:7.80px;color:#3f3f3f;transform:scaleX(0.9477);transform-origin:0 50%;-webkit-text-stroke:0.14px;">17: OUTPUT ST CH1L</span>
<div class="r" style="left:404.00px;top:338.24px;width:261.00px;height:1.80px;background:#e7e7e7;border-radius:1px;"></div>
<div class="r" style="left:399.65px;top:336.29px;width:5.90px;height:5.90px;background:#fff;border-radius:50%;box-shadow:0 0 0 0.5px #e3e3e3,0 0.3px 0.6px rgba(0,0,0,0.12);"></div>
<div class="r" style="left:668.60px;top:334.64px;width:19.80px;height:8.40px;background:#fff;box-shadow:0 0 0 0.5px #e6e6e6;border-radius:0.5px;"></div>
<div class="r" style="left:691.20px;top:334.64px;width:20.20px;height:8.40px;background:#fff;box-shadow:0 0 0 0.5px #e6e6e6;border-radius:0.5px;"></div>
<div class="r" style="left:719.30px;top:336.34px;width:6.20px;height:6.20px;background:#fff;border:0.7px solid #e0e0e0;border-radius:1.5px;"></div>
<div class="r" style="left:738.10px;top:336.34px;width:6.20px;height:6.20px;background:#fff;border:0.7px solid #e0e0e0;border-radius:1.5px;"></div>
<span class="t " style="left:284.80px;top:345.70px;font-size:6.50px;line-height:7.80px;color:#3f3f3f;transform:scaleX(0.9477);transform-origin:0 50%;-webkit-text-stroke:0.14px;">18: OUTPUT ST CH1R</span>
<div class="r" style="left:404.00px;top:348.81px;width:261.00px;height:1.80px;background:#e7e7e7;border-radius:1px;"></div>
<div class="r" style="left:399.65px;top:346.86px;width:5.90px;height:5.90px;background:#fff;border-radius:50%;box-shadow:0 0 0 0.5px #e3e3e3,0 0.3px 0.6px rgba(0,0,0,0.12);"></div>
<div class="r" style="left:668.60px;top:345.20px;width:19.80px;height:8.40px;background:#fff;box-shadow:0 0 0 0.5px #e6e6e6;border-radius:0.5px;"></div>
<div class="r" style="left:691.20px;top:345.20px;width:20.20px;height:8.40px;background:#fff;box-shadow:0 0 0 0.5px #e6e6e6;border-radius:0.5px;"></div>
<div class="r" style="left:719.30px;top:346.90px;width:6.20px;height:6.20px;background:#fff;border:0.7px solid #e0e0e0;border-radius:1.5px;"></div>
<div class="r" style="left:738.10px;top:346.90px;width:6.20px;height:6.20px;background:#fff;border:0.7px solid #e0e0e0;border-radius:1.5px;"></div>
<span class="t " style="left:284.80px;top:356.27px;font-size:6.50px;line-height:7.80px;color:#3f3f3f;transform:scaleX(0.9477);transform-origin:0 50%;-webkit-text-stroke:0.14px;">19: OUTPUT ST CH2L</span>
<div class="r" style="left:404.00px;top:359.37px;width:261.00px;height:1.80px;background:#e7e7e7;border-radius:1px;"></div>
<div class="r" style="left:399.65px;top:357.42px;width:5.90px;height:5.90px;background:#fff;border-radius:50%;box-shadow:0 0 0 0.5px #e3e3e3,0 0.3px 0.6px rgba(0,0,0,0.12);"></div>
<div class="r" style="left:668.60px;top:355.77px;width:19.80px;height:8.40px;background:#fff;box-shadow:0 0 0 0.5px #e6e6e6;border-radius:0.5px;"></div>
<div class="r" style="left:691.20px;top:355.77px;width:20.20px;height:8.40px;background:#fff;box-shadow:0 0 0 0.5px #e6e6e6;border-radius:0.5px;"></div>
<div class="r" style="left:719.30px;top:357.47px;width:6.20px;height:6.20px;background:#fff;border:0.7px solid #e0e0e0;border-radius:1.5px;"></div>
<div class="r" style="left:738.10px;top:357.47px;width:6.20px;height:6.20px;background:#fff;border:0.7px solid #e0e0e0;border-radius:1.5px;"></div>
<span class="t " style="left:284.80px;top:366.83px;font-size:6.50px;line-height:7.80px;color:#3f3f3f;transform:scaleX(0.9477);transform-origin:0 50%;-webkit-text-stroke:0.14px;">20: OUTPUT ST CH2R</span>
<div class="r" style="left:404.00px;top:369.94px;width:261.00px;height:1.80px;background:#e7e7e7;border-radius:1px;"></div>
<div class="r" style="left:399.65px;top:367.99px;width:5.90px;height:5.90px;background:#fff;border-radius:50%;box-shadow:0 0 0 0.5px #e3e3e3,0 0.3px 0.6px rgba(0,0,0,0.12);"></div>
<div class="r" style="left:668.60px;top:366.33px;width:19.80px;height:8.40px;background:#fff;box-shadow:0 0 0 0.5px #e6e6e6;border-radius:0.5px;"></div>
<div class="r" style="left:691.20px;top:366.33px;width:20.20px;height:8.40px;background:#fff;box-shadow:0 0 0 0.5px #e6e6e6;border-radius:0.5px;"></div>
<div class="r" style="left:719.30px;top:368.03px;width:6.20px;height:6.20px;background:#fff;border:0.7px solid #e0e0e0;border-radius:1.5px;"></div>
<div class="r" style="left:738.10px;top:368.03px;width:6.20px;height:6.20px;background:#fff;border:0.7px solid #e0e0e0;border-radius:1.5px;"></div>
<span class="t " style="left:284.80px;top:377.40px;font-size:6.50px;line-height:7.80px;color:#3f3f3f;transform:scaleX(0.9477);transform-origin:0 50%;-webkit-text-stroke:0.14px;">21: OUTPUT ST CH3L</span>
<div class="r" style="left:404.00px;top:380.50px;width:261.00px;height:1.80px;background:#e7e7e7;border-radius:1px;"></div>
<div class="r" style="left:399.65px;top:378.55px;width:5.90px;height:5.90px;background:#fff;border-radius:50%;box-shadow:0 0 0 0.5px #e3e3e3,0 0.3px 0.6px rgba(0,0,0,0.12);"></div>
<div class="r" style="left:668.60px;top:376.90px;width:19.80px;height:8.40px;background:#fff;box-shadow:0 0 0 0.5px #e6e6e6;border-radius:0.5px;"></div>
<div class="r" style="left:691.20px;top:376.90px;width:20.20px;height:8.40px;background:#fff;box-shadow:0 0 0 0.5px #e6e6e6;border-radius:0.5px;"></div>
<div class="r" style="left:719.30px;top:378.60px;width:6.20px;height:6.20px;background:#fff;border:0.7px solid #e0e0e0;border-radius:1.5px;"></div>
<div class="r" style="left:738.10px;top:378.60px;width:6.20px;height:6.20px;background:#fff;border:0.7px solid #e0e0e0;border-radius:1.5px;"></div>
<span class="t " style="left:284.80px;top:387.96px;font-size:6.50px;line-height:7.80px;color:#3f3f3f;transform:scaleX(0.9477);transform-origin:0 50%;-webkit-text-stroke:0.14px;">22: OUTPUT ST CH3R</span>
<div class="r" style="left:404.00px;top:391.06px;width:261.00px;height:1.80px;background:#e7e7e7;border-radius:1px;"></div>
<div class="r" style="left:399.65px;top:389.12px;width:5.90px;height:5.90px;background:#fff;border-radius:50%;box-shadow:0 0 0 0.5px #e3e3e3,0 0.3px 0.6px rgba(0,0,0,0.12);"></div>
<div class="r" style="left:668.60px;top:387.46px;width:19.80px;height:8.40px;background:#fff;box-shadow:0 0 0 0.5px #e6e6e6;border-radius:0.5px;"></div>
<div class="r" style="left:691.20px;top:387.46px;width:20.20px;height:8.40px;background:#fff;box-shadow:0 0 0 0.5px #e6e6e6;border-radius:0.5px;"></div>
<div class="r" style="left:719.30px;top:389.16px;width:6.20px;height:6.20px;background:#fff;border:0.7px solid #e0e0e0;border-radius:1.5px;"></div>
<div class="r" style="left:738.10px;top:389.16px;width:6.20px;height:6.20px;background:#fff;border:0.7px solid #e0e0e0;border-radius:1.5px;"></div>
<span class="t " style="left:284.80px;top:398.53px;font-size:6.50px;line-height:7.80px;color:#3f3f3f;transform:scaleX(0.9477);transform-origin:0 50%;-webkit-text-stroke:0.14px;">23: OUTPUT ST CH4L</span>
<div class="r" style="left:404.00px;top:401.63px;width:261.00px;height:1.80px;background:#e7e7e7;border-radius:1px;"></div>
<div class="r" style="left:399.65px;top:399.68px;width:5.90px;height:5.90px;background:#fff;border-radius:50%;box-shadow:0 0 0 0.5px #e3e3e3,0 0.3px 0.6px rgba(0,0,0,0.12);"></div>
<div class="r" style="left:668.60px;top:398.03px;width:19.80px;height:8.40px;background:#fff;box-shadow:0 0 0 0.5px #e6e6e6;border-radius:0.5px;"></div>
<div class="r" style="left:691.20px;top:398.03px;width:20.20px;height:8.40px;background:#fff;box-shadow:0 0 0 0.5px #e6e6e6;border-radius:0.5px;"></div>
<div class="r" style="left:719.30px;top:399.73px;width:6.20px;height:6.20px;background:#fff;border:0.7px solid #e0e0e0;border-radius:1.5px;"></div>
<div class="r" style="left:738.10px;top:399.73px;width:6.20px;height:6.20px;background:#fff;border:0.7px solid #e0e0e0;border-radius:1.5px;"></div>
<span class="t " style="left:284.80px;top:409.09px;font-size:6.50px;line-height:7.80px;color:#3f3f3f;transform:scaleX(0.9477);transform-origin:0 50%;-webkit-text-stroke:0.14px;">24: OUTPUT ST CH4R</span>
<div class="r" style="left:404.00px;top:412.19px;width:261.00px;height:1.80px;background:#e7e7e7;border-radius:1px;"></div>
<div class="r" style="left:399.65px;top:410.25px;width:5.90px;height:5.90px;background:#fff;border-radius:50%;box-shadow:0 0 0 0.5px #e3e3e3,0 0.3px 0.6px rgba(0,0,0,0.12);"></div>
<div class="r" style="left:668.60px;top:408.59px;width:19.80px;height:8.40px;background:#fff;box-shadow:0 0 0 0.5px #e6e6e6;border-radius:0.5px;"></div>
<div class="r" style="left:691.20px;top:408.59px;width:20.20px;height:8.40px;background:#fff;box-shadow:0 0 0 0.5px #e6e6e6;border-radius:0.5px;"></div>
<div class="r" style="left:719.30px;top:410.29px;width:6.20px;height:6.20px;background:#fff;border:0.7px solid #e0e0e0;border-radius:1.5px;"></div>
<div class="r" style="left:738.10px;top:410.29px;width:6.20px;height:6.20px;background:#fff;border:0.7px solid #e0e0e0;border-radius:1.5px;"></div>
</div>
</body></html>
